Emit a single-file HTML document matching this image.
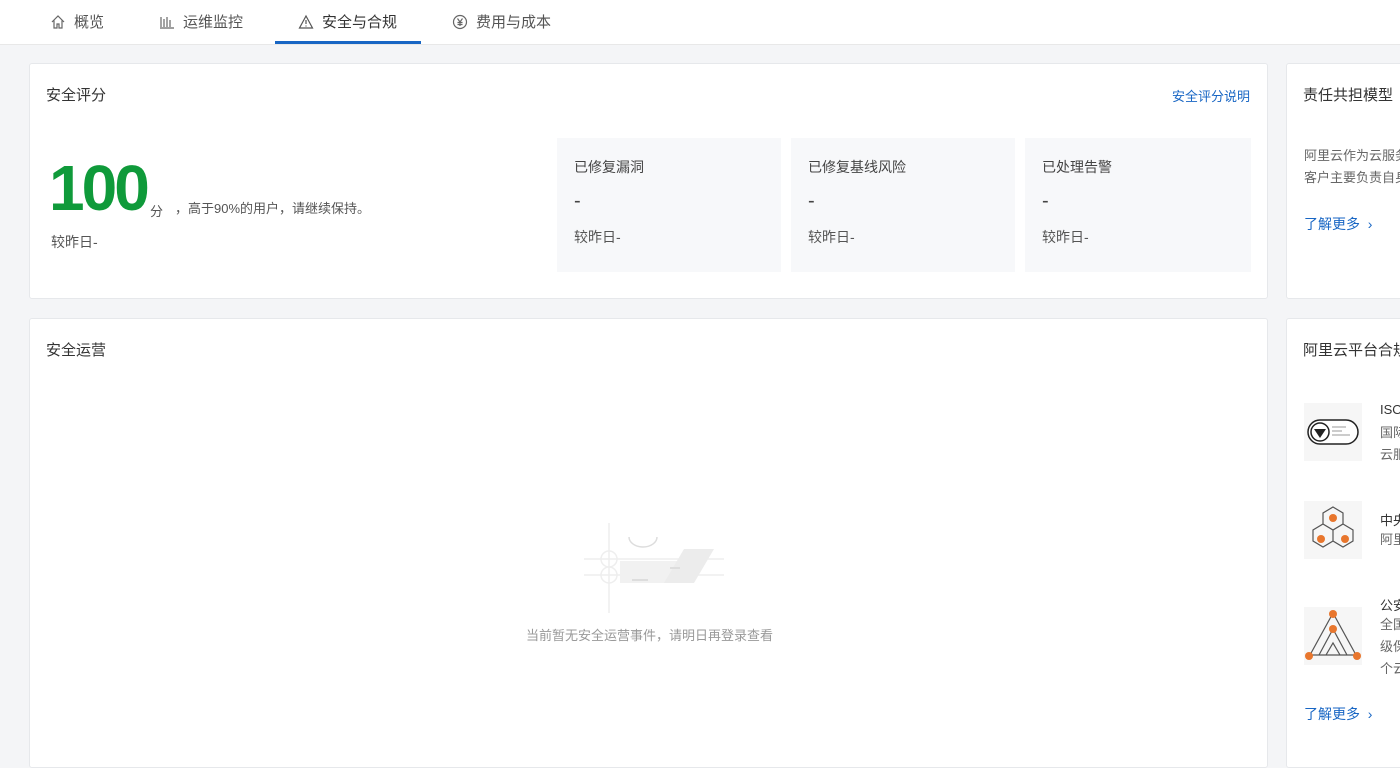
<!DOCTYPE html>
<html><head><meta charset="utf-8"><style>
*{margin:0;padding:0;box-sizing:border-box}
body{width:1400px;height:751px;overflow:hidden;background:#f4f5f7;font-family:"Liberation Sans","Noto Sans CJK SC",sans-serif;color:#333;position:relative}
.nav{position:absolute;left:0;top:0;width:1400px;height:45px;background:#fff;border-bottom:1px solid #e8e8e8}
.tab{position:absolute;top:11px;font-size:15px;color:#555;display:flex;align-items:center;gap:8px}
.tab svg{width:16px;height:16px}
.ul{position:absolute;left:275px;top:41px;width:146px;height:3px;background:#1866c4}
.card{position:absolute;background:#fff;border:1px solid #e6e8eb;border-radius:3px}
.t{position:absolute;font-size:15px;color:#333;white-space:nowrap}
.box{position:absolute;top:138px;width:224px;height:134px;background:#f7f8fa}
.box .a{position:absolute;left:17px;top:19px;font-size:14px;color:#444}
.box .b{position:absolute;left:17px;top:52px;font-size:20px;color:#444}
.box .c{position:absolute;left:17px;top:89px;font-size:14px;color:#555}
.link{color:#1866c4;font-size:14px;position:absolute;white-space:nowrap}
.g{font-size:13px;color:#666;position:absolute;line-height:22px;white-space:nowrap}
.n{position:absolute;font-size:13px;color:#333;white-space:nowrap}
.ic{position:absolute;left:1304px;width:58px;height:58px;background:#f6f6f6}
</style></head><body>
<div class="nav">
<div class="tab" style="left:50px"><svg viewBox="0 0 16 16" fill="none" stroke="#666" stroke-width="1.2"><path d="M2 8L8 2l6 6M4 6.5V14h3v-4h2v4h3V6.5"/></svg>概览</div>
<div class="tab" style="left:159px"><svg viewBox="0 0 16 16" fill="none" stroke="#666" stroke-width="1.2"><path d="M2 3v10M5 5v8M8 3v10M11 6v7M1 14h14"/></svg>运维监控</div>
<div class="tab" style="left:298px;color:#333"><svg viewBox="0 0 16 16" fill="none" stroke="#555" stroke-width="1.2"><path d="M8 2L1.5 14h13z M8 6v4M8 11.5v1"/></svg>安全与合规</div>
<div class="tab" style="left:452px"><svg viewBox="0 0 16 16" fill="none" stroke="#666" stroke-width="1.2"><circle cx="8" cy="8" r="6.5"/><path d="M5.5 4.5L8 8l2.5-3.5M8 8v4M5.5 8.5h5M5.5 10.5h5"/></svg>费用与成本</div>
<div class="ul"></div>
</div>

<div class="card" style="left:29px;top:63px;width:1239px;height:236px">
<div class="t" style="left:16px;top:20px">安全评分</div>
<div class="link" style="right:17px;top:22px;font-size:13px">安全评分说明</div>
<div style="position:absolute;left:19px;top:88px;font-size:64px;font-weight:bold;color:#0f9a3a;letter-spacing:-3px;line-height:72px">100</div>
<div style="position:absolute;left:120px;top:137px;font-size:13px;color:#555">分</div>
<div style="position:absolute;left:145px;top:134px;font-size:13px;color:#555">，高于90%的用户，请继续保持。</div>
<div style="position:absolute;left:21px;top:168px;font-size:14px;color:#555">较昨日-</div>
<div class="box" style="left:527px;top:74px"><div class="a">已修复漏洞</div><div class="b">-</div><div class="c">较昨日-</div></div>
<div class="box" style="left:761px;top:74px"><div class="a">已修复基线风险</div><div class="b">-</div><div class="c">较昨日-</div></div>
<div class="box" style="left:995px;top:74px;width:226px"><div class="a">已处理告警</div><div class="b">-</div><div class="c">较昨日-</div></div>
</div>

<div class="card" style="left:1286px;top:63px;width:130px;height:236px;overflow:hidden">
<div class="t" style="left:16px;top:20px">责任共担模型</div>
<div class="g" style="left:17px;top:81px">阿里云作为云服务<br>客户主要负责自身</div>
<div class="link" style="left:17px;top:150px">了解更多 &nbsp;›</div>
</div>

<div class="card" style="left:29px;top:318px;width:1239px;height:450px">
<div class="t" style="left:16px;top:20px">安全运营</div>
<svg style="position:absolute;left:554px;top:204px" width="140" height="90" viewBox="0 0 140 90"><g stroke="#eee" stroke-width="1.5" fill="none"><path d="M0 36h140M0 52h140M25 0v90"/><circle cx="25" cy="36" r="8"/><circle cx="25" cy="52" r="8"/><path d="M45 14a14 10 0 0 0 28 0" stroke="#ddd"/></g><rect x="36" y="38" width="70" height="22" fill="#f1f1f1"/><path d="M80 60l20-34h30l-20 34z" fill="#ececec"/><rect x="48" y="56" width="16" height="2" fill="#ddd"/><rect x="86" y="44" width="10" height="2" fill="#ddd"/></svg>
<div style="position:absolute;left:0;width:1239px;text-align:center;top:306px;font-size:13px;color:#999">当前暂无安全运营事件，请明日再登录查看</div>
</div>

<div class="card" style="left:1286px;top:318px;width:130px;height:450px;overflow:hidden">
<div class="t" style="left:16px;top:20px">阿里云平台合规</div>
</div>
<div class="ic" style="top:403px"><svg width="58" height="58" viewBox="0 0 58 58"><rect x="4" y="17" width="50" height="24" rx="12" fill="#fff" stroke="#222" stroke-width="1.5"/><circle cx="16" cy="29" r="9" fill="#fff" stroke="#222" stroke-width="1.5"/><path d="M10 26h12l-6 9z" fill="#222"/><path d="M28 24h14M28 28h10M28 32h18" stroke="#999"/></svg></div>
<div class="ic" style="top:501px"><svg width="58" height="58" viewBox="0 0 58 58" fill="none" stroke="#555" stroke-width="1.2"><path d="M29 6l10 6v11l-10 6-10-6V12zM19 23l10 6v11l-10 6-10-6V29zM39 23l10 6v11l-10 6-10-6V29z"/><g fill="#e8762d" stroke="none"><circle cx="29" cy="17" r="4"/><circle cx="17" cy="38" r="4"/><circle cx="41" cy="38" r="4"/></g></svg></div>
<div class="ic" style="top:607px"><svg width="58" height="58" viewBox="0 0 58 58" fill="none" stroke="#555" stroke-width="1.2"><path d="M29 6L6 48h46zM29 22l-14 26M29 22l14 26M22 48l7-12 7 12"/><g fill="#e8762d" stroke="none"><circle cx="29" cy="7" r="4"/><circle cx="29" cy="22" r="4"/><circle cx="5" cy="49" r="4"/><circle cx="53" cy="49" r="4"/></g></svg></div>
<div class="n" style="left:1380px;top:402px">ISO</div>
<div class="g" style="left:1380px;top:422px">国际<br>云服</div>
<div class="n" style="left:1380px;top:510px">中央</div>
<div class="g" style="left:1380px;top:529px">阿里</div>
<div class="n" style="left:1380px;top:595px">公安</div>
<div class="g" style="left:1380px;top:614px">全国<br>级保<br>个云</div>
<div class="link" style="left:1304px;top:704px">了解更多 &nbsp;›</div>
</body></html>
